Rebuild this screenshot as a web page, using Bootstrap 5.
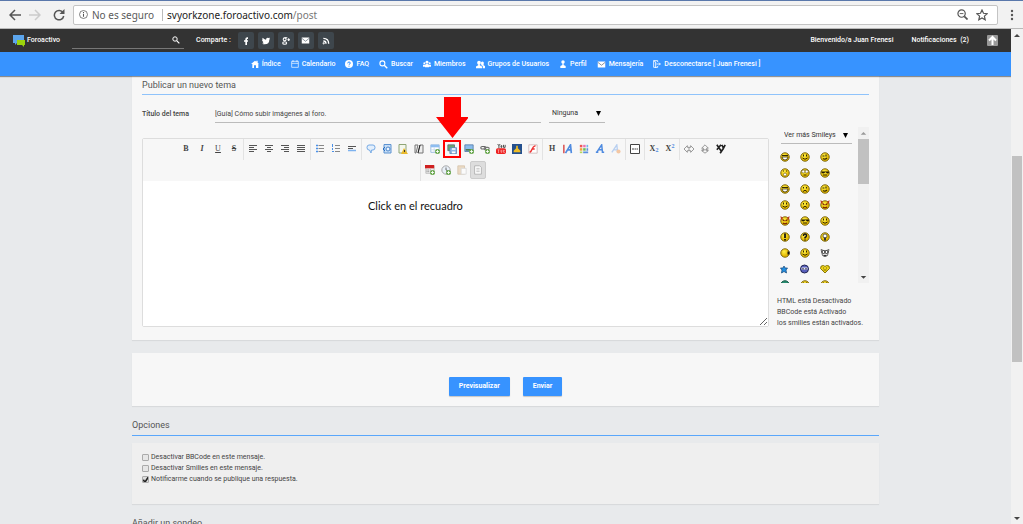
<!DOCTYPE html>
<html lang="es">
<head>
<meta charset="utf-8">
<meta name="viewport" content="width=device-width, initial-scale=1">
<title>Publicar un nuevo tema</title>
<link href="https://cdn.jsdelivr.net/npm/bootstrap@5.3.0/dist/css/bootstrap.min.css" rel="stylesheet">
<style>
body{font:400 7px/11px Roboto,"Liberation Sans",sans-serif;color:#444;background:#e8eaec}
button,input,select,textarea{font:inherit;color:inherit}
button{border:0;background:none;padding:0}
svg{display:block;flex:none}
.i8{width:8px;height:8px}.i9{width:9px;height:9px}.i12{width:12px;height:12px}
/* browser bar */
.browser{height:29px;background:#f2f2f2;border-top:1px solid #5a78ab;border-bottom:1px solid #b9b9b9;padding:0 9px;color:#5a5a5a;font:10px/18px "Noto Sans",sans-serif}
.address{height:20px;background:#fff;border:1px solid #c4c4c4;border-radius:2px;padding:0 5px}
.host{color:#222}.tail{color:#777}
.sepbar{width:1px;height:12px;background:#bbb}
/* forum bars */
.topbar{height:23px;background:#333;color:#fff;font-weight:500;padding:0 13px}
.topbar a,.mainnav a{color:#fff;text-decoration:none}
.brand{gap:2px}
.topsearch{width:112px;border-bottom:1px solid #777;height:17px;margin:0 12px}
.topsearch input{border:0;background:none;width:90px;height:14px;outline:0}
.share-label{margin-right:7px}
.share{width:16px;height:17px;background:#3e464c;border-radius:2px}
.session{gap:18px}
.mainnav{height:24px;background:#3793ff;font-weight:500;box-shadow:0 1px 1px #0006;position:relative}
.nv{display:flex;align-items:center;gap:3px;margin:0 5px}
.totop{width:11px;height:11px;background:#999;border-radius:1px}
/* content */
.forum{max-width:747px;width:100%}
.panel{background:#f7f7f7;box-shadow:0 1px 1px #0001}
.postbox{padding:3px 10px 11px}
.title{font-size:9px;line-height:12px;font-weight:400;color:#555;margin:0;border-bottom:1px solid #8fc3fb}
.title.strong{border-color:#5aa7fb}
.postbox .title{padding-bottom:3px}
.subject{margin-top:10px}
.lined{border:0;border-bottom:1px solid #bbb;background:none;border-radius:0;outline:0;height:18px;padding:0}
.pick{appearance:none;color:#333;background:url("data:image/svg+xml,%3Csvg xmlns='http://www.w3.org/2000/svg' viewBox='0 0 6 6'%3E%3Cpath d='M0 0h6L3 6z'/%3E%3C/svg%3E") no-repeat right 4px center/5px 5px}
.prefix{width:56px;padding-left:3px;margin-right:264px}
.label{width:73px;font-weight:500}
.work{margin-top:4px}
.editor{border:1px solid #ddd;border-radius:2px;background:#fff;margin-top:11px}
.tools{background:#f7f7f7;padding:0 32px 0 28px}
.grp{display:flex;align-items:center;height:21px;padding:0 1px 2px}
.grp.bar{border-right:1px solid #e3e3e3}
.grp.edge{border-left:1px solid #e3e3e3}
.tb{width:16px;height:18px;display:flex;align-items:center;justify-content:center;font:bold 8px/10px "Liberation Serif",serif;color:#444}
.tb svg{width:10px;height:10px}
.tb.hot{width:18px;border:2px solid #f00;position:relative}
.tb.hot .arrow-down{position:absolute;bottom:18px;left:50%;margin-left:-16px;width:32px;height:41px}
.tb.on{background:#ddd;border:1px solid #ccc;border-radius:2px}
.tb sub,.tb sup{color:#4f8be0}
.editor textarea{height:145px;border:0;outline:0;resize:vertical;width:100%;display:block;padding:4px}
.note{position:absolute;left:36%;top:60px;font:11px/14px Lato,sans-serif;color:#111}
.side{width:92px}
.smileys{height:156px;overflow:hidden}
.more{width:71px;margin-left:4px;padding-left:3px;height:17px}
.faces{display:grid;grid-template-columns:repeat(3,20px);grid-auto-rows:16px;margin:5px 0 0 -2px}
.faces button{display:flex;align-items:center;justify-content:center}
.faces svg{width:10px;height:10px}
.rules{margin-top:13px}
.track{background:#f1f1f1}
.track i{background:#c1c1c1}
.track svg{width:100%;height:12px}
.side-track{width:11px}
.thumb-a{height:45px}
.page-track{width:12px}
.page-track .before{flex:114}.page-track .thumb-b{flex:205;margin:0 1px}.page-track .after{flex:149}
.sendbox{margin-top:13px;padding:24px 0 10px;gap:13px}
.blue{background:#3793ff;color:#fff;font-weight:700;height:19px;border-radius:1px;box-shadow:0 1px 1px #0003;line-height:19px;padding:0 10px}
.optitle{margin-top:13px;padding-bottom:4px;margin-bottom:7px}
.opts{background:#efefef;padding:9px 10px 19px;box-shadow:0 1px 1px #0001}
.opts label{gap:2px}
.opts input{width:7px;height:7px;margin:0;flex:none;appearance:none;border:1px solid #aaa;background:#e6e6e6;border-radius:1px}
.opts input:checked{background:#ddd url("data:image/svg+xml,%3Csvg xmlns='http://www.w3.org/2000/svg' viewBox='0 0 8 8'%3E%3Cpath d='M1 4l2 3 4-6' fill='none' stroke='%23222' stroke-width='2'/%3E%3C/svg%3E") center/6px 6px no-repeat}
</style>
</head>
<body class="vh-100 overflow-hidden d-flex flex-column">
<svg width="0" height="0" class="position-absolute" aria-hidden="true">
<defs>
<radialGradient id="gy" cx=".4" cy=".35"><stop offset="0" stop-color="#fff04a"/><stop offset="1" stop-color="#e3b800"/></radialGradient>
<g id="face"><circle cx="10" cy="10" r="8.5" fill="url(#gy)" stroke="#75600a" stroke-width="1.8"/></g>
<symbol id="grin" viewBox="0 0 20 20"><use href="#face"/><path d="M4 7h12" stroke="#332800" stroke-width="2"/><path d="M4 10h12q-1 6-6 6t-6-6z" fill="#fff" stroke="#332800" stroke-width="1.500"/></symbol>
<symbol id="smile" viewBox="0 0 20 20"><use href="#face"/><path d="M7 5v4M13 5v4M5 12q5 5 10 0" fill="none" stroke="#332800" stroke-width="2"/></symbol>
<symbol id="wink" viewBox="0 0 20 20"><use href="#face"/><path d="M5 8h4M12 5v4M6 13q4 3 8-1" fill="none" stroke="#332800" stroke-width="2.2"/></symbol>
<symbol id="sad" viewBox="0 0 20 20"><use href="#face"/><path d="M7 6v3M13 6v3M6 15q4-5 8 0" fill="none" stroke="#332800" stroke-width="2"/></symbol>
<symbol id="shock" viewBox="0 0 20 20"><use href="#face"/><circle cx="6.500" cy="7" r="3" fill="#fff" stroke="#443700"/><circle cx="13.500" cy="7" r="3" fill="#fff" stroke="#443700"/><path d="M7 14h6" stroke="#332800" stroke-width="2"/></symbol>
<symbol id="open" viewBox="0 0 20 20"><use href="#face"/><path d="M6 6h2M12 6h2" stroke="#332800" stroke-width="2"/><circle cx="10" cy="13" r="3" fill="#fff" stroke="#443700"/></symbol>
<symbol id="cool" viewBox="0 0 20 20"><use href="#face"/><path d="M2 7h16v2q-3 4-7-1-4 5-8 1z" fill="#221b00"/><path d="M6 14h8" stroke="#332800" stroke-width="2"/></symbol>
<symbol id="devil" viewBox="0 0 20 20"><use href="#face"/><path d="M1 0l5 4-4 4zM19 0l-5 4 4 4z" fill="#b8371c"/><path d="M5 7l4 3M15 7l-4 3M6 14q4 3 8 0" fill="none" stroke="#7a1900" stroke-width="2.200"/></symbol>
<symbol id="bang" viewBox="0 0 20 20"><use href="#face"/><path d="M10 3v9M10 14v3" stroke="#111" stroke-width="3.500"/></symbol>
<symbol id="ask" viewBox="0 0 20 20"><use href="#face"/><path d="M7 8q0-4 3-4t3 3-3 4v2M10 15v2" fill="none" stroke="#111" stroke-width="2.800"/></symbol>
<symbol id="bulb" viewBox="0 0 20 20"><use href="#face"/><circle cx="10" cy="8" r="4" fill="#fff" stroke="#333" stroke-width="1.500"/><path d="M10 11v6" stroke="#333" stroke-width="4"/></symbol>
<symbol id="side" viewBox="0 0 20 20"><use href="#face"/><path d="M17 7v6" stroke="#111" stroke-width="4"/></symbol>
<symbol id="geek" viewBox="0 0 20 20"><path d="M2 3l8 3 8-3-3 12q-5 5-10 0z" fill="#ddd" stroke="#444" stroke-width="1.500"/><circle cx="7" cy="8" r="3" fill="#fff" stroke="#333" stroke-width="2"/><circle cx="13" cy="8" r="3" fill="#fff" stroke="#333" stroke-width="2"/><path d="M7 15h6" stroke="#333" stroke-width="2"/></symbol>
<symbol id="star" viewBox="0 0 20 20"><path d="M8 4l2 4h5l-3 4 1 6-5-3-5 3 1-6-3-4h5z" fill="#218fe2" stroke="#174a7c" stroke-width="1.500"/></symbol>
<symbol id="ninja" viewBox="0 0 20 20"><circle cx="9" cy="10" r="8" fill="#5960bd" stroke="#222552" stroke-width="2"/><path d="M3 7h12v4H3z" fill="#e8e8f8"/><path d="M6 8v3M12 8v3" stroke="#111" stroke-width="2"/></symbol>
<symbol id="heart" viewBox="0 0 20 20"><path d="M10 18L1 9q0-7 6-6l3 2 3-2q7-1 6 6z" fill="#ecd31a" stroke="#7c6a00" stroke-width="1.800"/><path d="M6 8h2M12 8h2M7 12h6" stroke="#554700" stroke-width="1.500"/></symbol>
<symbol id="green" viewBox="0 0 20 20"><circle cx="10" cy="10" r="8.500" fill="#2a8f72" stroke="#175848" stroke-width="2"/></symbol>
<symbol id="mag" viewBox="0 0 12 12"><circle cx="4.500" cy="4.500" r="3.300" fill="none" stroke="currentColor" stroke-width="1.500"/><path d="M7 7l4 4" stroke="currentColor" stroke-width="1.800"/></symbol>
<symbol id="mail" viewBox="0 0 12 12"><path d="M1 2h10v8H1z" fill="currentColor"/><path d="M1 3l5 4 5-4" fill="none" stroke="#65717c"/></symbol>
<g id="plus"><circle cx="9" cy="9" r="3" fill="#63a447"/><path d="M9 7v4M7 9h4" stroke="#fff"/></g>
</defs>
</svg>

<header class="browser d-flex align-items-center flex-shrink-0">
  <button aria-label="Atrás"><svg class="i12" viewBox="0 0 12 12" fill="none" stroke="#555" stroke-width="1.500"><path d="M12 6H1M6 1L1 6l5 5"/></svg></button>
  <button class="ms-2" aria-label="Adelante"><svg class="i12" viewBox="0 0 12 12" fill="none" stroke="#ccc" stroke-width="1.500"><path d="M0 6h11M6 1l5 5-5 5"/></svg></button>
  <button class="ms-2 me-2 ps-1" aria-label="Recargar"><svg class="i12" viewBox="0 0 12 12"><path d="M10 3.500A4.700 4.700 0 1 0 10.700 7" fill="none" stroke="#555" stroke-width="1.500"/><path d="M11.500 0v5h-5z" fill="#555"/></svg></button>
  <div class="address d-flex align-items-center flex-fill gap-1">
    <svg class="i9" viewBox="0 0 12 12" fill="none" stroke="#555"><circle cx="6" cy="6" r="5.300"/><path d="M6 5v4M6 2.500v1.500" stroke-width="1.400"/></svg>
    <span>No es seguro</span><span class="sepbar ms-1"></span>
    <span class="me-auto"><span class="host">svyorkzone.foroactivo.com</span><span class="tail">/post</span></span>
    <button aria-label="Alejar"><svg width="11" height="11" viewBox="0 0 12 12" fill="none" stroke="#555"><circle cx="5" cy="5" r="4" stroke-width="1.300"/><path d="M3 5h4"/><path d="M8 8l3.500 3.500" stroke-width="1.800"/></svg></button>
    <button class="ms-1 me-1" aria-label="Favorito"><svg width="12" height="12" viewBox="0 0 12 12" fill="none" stroke="#555" stroke-width="1.200"><path d="M6 1l1.500 3.300 3.700.4-2.800 2.400.8 3.700L6 9l-3.200 1.800.8-3.700L.8 4.700l3.700-.4z"/></svg></button>
  </div>
  <button class="ms-2 ps-1" aria-label="Menú"><svg width="4" height="12" viewBox="0 0 4 12" fill="#555"><circle cx="2" cy="2" r="1.200"/><circle cx="2" cy="6" r="1.200"/><circle cx="2" cy="10" r="1.200"/></svg></button>
</header>

<div class="d-flex flex-fill overflow-hidden">
<div class="flex-fill overflow-hidden">
  <div class="topbar d-flex align-items-center">
    <a href="#" class="brand d-flex align-items-center"><svg width="12" height="12" viewBox="0 0 12 12"><path d="M0 0h11v8H4l-2 2V8H0z" fill="#5ca5ec"/><path d="M4 5h8v5h-1v2L9 10H4z" fill="#9bd30c"/></svg>Foroactivo</a>
    <form class="topsearch d-flex align-items-center justify-content-between pe-1"><input type="search" aria-label="Buscar"><button type="button" aria-label="Buscar" class="text-white"><svg class="i8"><use href="#mag"/></svg></button></form>
    <span class="share-label">Comparte :</span>
    <div class="d-flex gap-1">
      <a href="#" aria-label="Facebook" class="share d-flex align-items-center justify-content-center"><svg class="i8" viewBox="0 0 12 12"><path d="M5 12V7H3V5h2V3q0-3 4-2.500V3H7.500v2H9v2H7.500v5z" fill="#fff"/></svg></a>
      <a href="#" aria-label="Twitter" class="share d-flex align-items-center justify-content-center"><svg class="i8" viewBox="0 0 12 12"><path d="M0 10q2 0 3-1-2 0-2-2h1Q0 6 0 4l1 .3Q0 3 1 1q2 2 5 3 0-3 2.500-3L10 1.500 12 1l-1 2 1-.2-1 1.400Q11 11 4 11q-2 0-4-1z" fill="#fff"/></svg></a>
      <a href="#" aria-label="Google+" class="share d-flex align-items-center justify-content-center"><svg class="i8" viewBox="0 0 12 12" fill="none" stroke="#fff" stroke-width="1.600"><circle cx="4" cy="3.500" r="2.200"/><ellipse cx="4" cy="9" rx="3" ry="2"/><path d="M4 1h4M8 4h4M10 2v4"/></svg></a>
      <a href="#" aria-label="Correo" class="share d-flex align-items-center justify-content-center"><svg class="i9"><use href="#mail"/></svg></a>
      <a href="#" aria-label="RSS" class="share d-flex align-items-center justify-content-center"><svg class="i8" viewBox="0 0 12 12" fill="none" stroke="#fff" stroke-width="2"><path d="M2 2q8 0 8 8M2 6q4 0 4 4"/><circle cx="2.500" cy="9.500" r=".6"/></svg></a>
    </div>
    <div class="session d-flex align-items-center ms-auto">
      <span>Bienvenido/a Juan Frenesi</span>
      <a href="#">Notificaciones&nbsp; (2)</a>
      <a href="#" aria-label="Arriba" class="totop"><svg width="11" height="11" viewBox="0 0 11 11" fill="none" stroke="#fff" stroke-width="2"><path d="M5.500 10V2M2 5.500L5.500 2 9 5.500"/></svg></a>
    </div>
  </div>
  <nav class="mainnav d-flex align-items-center justify-content-center" aria-label="Principal">
    <a href="#" class="nv"><svg class="i8" viewBox="0 0 12 12"><path d="M0 6l6-5 2 1.500V1h2v3l2 2h-1v6H7.500V8h-3v4H2V6z" fill="#fff"/></svg>Índice</a>
    <a href="#" class="nv"><svg class="i8" viewBox="0 0 12 12" fill="none" stroke="#fff"><path d="M1 2h10v9H1zM1 5h10M3 0v3M9 0v3"/></svg>Calendario</a>
    <a href="#" class="nv"><svg class="i8" viewBox="0 0 12 12"><circle cx="6" cy="6" r="6" fill="#fff"/><path d="M4 5q0-2 2-2t2 1.500-2 2V7M6 8.500V10" fill="none" stroke="#3793ff" stroke-width="1.500"/></svg>FAQ</a>
    <a href="#" class="nv"><svg class="i9"><use href="#mag"/></svg>Buscar</a>
    <a href="#" class="nv"><svg class="i8" viewBox="0 0 12 12" fill="#fff"><circle cx="6" cy="3.500" r="2.200"/><circle cx="2" cy="5" r="1.500"/><circle cx="10" cy="5" r="1.500"/><path d="M0 7h3l2-1h2l2 1h3v3H9v1H3v-1H0z"/></svg>Miembros</a>
    <a href="#" class="nv"><svg class="i9" viewBox="0 0 12 12" fill="#fff"><circle cx="4" cy="3.500" r="2.500"/><circle cx="8.500" cy="4" r="2"/><path d="M0 11V8.500l3-1.500V5h2v2l3 1.500V11zM9 11V8L7 7V5h3v2l2 1v3z"/></svg>Grupos de Usuarios</a>
    <a href="#" class="nv"><svg class="i8" viewBox="0 0 12 12" fill="#fff"><circle cx="6" cy="3" r="2.600"/><path d="M2 12V9l3-1.500V5h2v2.500L10 9v3z"/></svg>Perfil</a>
    <a href="#" class="nv"><svg class="i9"><use href="#mail"/></svg>Mensajería</a>
    <a href="#" class="nv"><svg class="i8" viewBox="0 0 12 12" fill="none" stroke="#fff" stroke-width="1.300"><path d="M7 3V1H1v10h6V9M1 1l3 2v9M5 6h6M9 4l2 2-2 2"/></svg>Desconectarse [ Juan Frenesi ]</a>
  </nav>

  <main class="forum mx-auto">
    <form>
    <section class="panel postbox">
      <h1 class="title">Publicar un nuevo tema</h1>
      <div class="d-flex align-items-center subject">
        <label class="label" for="subject">Título del tema</label>
        <input id="subject" class="lined flex-fill me-2" value="[Guía] Cómo subir imágenes al foro.">
        <select class="lined pick prefix" aria-label="Prefijo"><option>Ninguna</option></select>
      </div>
      <div class="d-flex work">
        <div class="editor flex-fill position-relative align-self-start">
          <div class="tools d-flex flex-wrap justify-content-center" role="toolbar" aria-label="Formato">
            <div class="grp bar">
              <button type="button" class="tb">B</button><button type="button" class="tb fst-italic">I</button><button type="button" class="tb fw-normal text-decoration-underline">U</button><button type="button" class="tb text-decoration-line-through">S</button>
            </div>
            <div class="grp bar">
              <button type="button" class="tb" aria-label="Izquierda"><svg viewBox="0 0 10 10" stroke="#555"><path d="M1 1.500h8M1 3.500h5M1 5.500h8M1 7.500h5"/></svg></button>
              <button type="button" class="tb" aria-label="Centrar"><svg viewBox="0 0 10 10" stroke="#555"><path d="M1 1.500h8M3 3.500h4M1 5.500h8M3 7.500h4"/></svg></button>
              <button type="button" class="tb" aria-label="Derecha"><svg viewBox="0 0 10 10" stroke="#555"><path d="M1 1.500h8M4 3.500h5M1 5.500h8M4 7.500h5"/></svg></button>
              <button type="button" class="tb" aria-label="Justificar"><svg viewBox="0 0 10 10" stroke="#555"><path d="M1 1.500h8M1 3.500h8M1 5.500h8M1 7.500h8"/></svg></button>
            </div>
            <div class="grp bar">
              <button type="button" class="tb" aria-label="Lista"><svg viewBox="0 0 10 10"><path d="M3.500 1.500H9M3.500 4.500H9M3.500 7.500H9" stroke="#888"/><path d="M1 1.500h2M1 4.500h2M1 7.500h2" stroke="#4a90e8" stroke-width="1.500"/></svg></button>
              <button type="button" class="tb" aria-label="Lista numerada"><svg viewBox="0 0 10 10"><path d="M4 1.500h5M4 4.500h5M4 7.500h5" stroke="#888"/><path d="M1.500 0v3M1.500 4v2M1 7.500h2" stroke="#4a90e8"/></svg></button>
              <button type="button" class="tb" aria-label="Línea"><svg viewBox="0 0 10 10"><path d="M1 2.500h8M1 4.500h5" stroke="#555"/><path d="M1 6.500h8" stroke="#7db2ef" stroke-width="1.500"/></svg></button>
            </div>
            <div class="grp bar">
              <button type="button" class="tb" aria-label="Cita"><svg viewBox="0 0 10 10"><path d="M3 1h4q2 0 2 2.500T7 6H5.500L5 9 3.500 6H3Q1 6 1 3.500T3 1z" fill="#e3effc" stroke="#75a9e4"/></svg></button>
              <button type="button" class="tb" aria-label="Código"><svg viewBox="0 0 10 10"><path d="M2 .5h7v8.500H2z" fill="#c8def6" stroke="#5d93d1"/><path d="M3 3L1 5l2 2" stroke="#296fc2" fill="none"/><circle cx="6" cy="5" r="2" fill="#eef6ff" stroke="#4a86ca"/></svg></button>
              <button type="button" class="tb" aria-label="Spoiler"><svg viewBox="0 0 10 10"><path d="M1 .5h7v8.500H1z" fill="#f4f7ec" stroke="#8fa576"/><path d="M6 4l4 6H3z" fill="#e9b92b"/><path d="M6.500 6v2" stroke="#333"/></svg></button>
              <button type="button" class="tb" aria-label="Oculto"><svg viewBox="0 0 10 10"><path d="M1 1h3L2 9H1zM9 1H6L4 9h5z" fill="#eee" stroke="#777"/><path d="M6 1L4 9" stroke="#222"/></svg></button>
              <button type="button" class="tb" aria-label="Tabla"><svg viewBox="0 0 12 12"><path d="M1 1h10v9H1z" fill="#fff" stroke="#8eb5dd"/><path d="M1 2.500h10" stroke="#8ebdf0" stroke-width="3"/><path d="M1 7h10M5 4v6" stroke="#c9d9e9"/><use href="#plus"/></svg></button>
              <button type="button" class="tb hot" aria-label="Alojar una imagen"><svg viewBox="0 0 12 12"><path d="M1 1h8v7H1z" fill="#6aa870" stroke="#667"/><path d="M3.500 4.500h8v7h-8z" fill="#8fb9e6" stroke="#5c84b3"/><path d="M6 5h4v2H6zM6 9h4v2H6z" fill="#fff"/></svg>
              <svg class="arrow-down" viewBox="0 0 32 41" fill="#f00"><path d="M8 0h17v20h8L16.500 41 0 20h8z"/></svg></button>
              <button type="button" class="tb" aria-label="Imagen"><svg viewBox="0 0 12 12"><path d="M1 1h10v8H1z" fill="#8bbcec" stroke="#557da8"/><path d="M2 6h8v2H2z" fill="#4f7b52"/><use href="#plus"/></svg></button>
              <button type="button" class="tb" aria-label="Enlace"><svg viewBox="0 0 12 12"><rect x="1" y="3" width="6" height="3" rx="1.500" fill="none" stroke="#666" stroke-width="1.300"/><rect x="5" y="4" width="6" height="3" rx="1.500" fill="none" stroke="#777" stroke-width="1.300"/><use href="#plus"/></svg></button>
              <button type="button" class="tb" aria-label="YouTube"><svg viewBox="0 0 12 12"><rect y="5" width="12" height="7" rx="2" fill="#e22"/><path d="M2 0l1.500 2L5 0M3.500 2v3M6 2h1v2H6zM9 1v3h2V1" fill="none" stroke="#333"/><path d="M2 7h2M3 7v4M6 7v3h1V7M9 7v3h2M9 8h2" stroke="#ffb5b5" fill="none" stroke-width=".8"/></svg></button>
              <button type="button" class="tb" aria-label="Vídeo"><svg viewBox="0 0 12 12"><path d="M0 0h12v12H0z" fill="#24508e"/><path d="M5 2h2v3l3 3v2H2V8l3-3z" fill="#f0bd24"/></svg></button>
              <button type="button" class="tb" aria-label="Flash"><svg viewBox="0 0 12 12"><path d="M1 1h10v10H1z" fill="#fff" stroke="#ccb6b6"/><path d="M9 2Q6 3 5 6T2 10M5 6h3" fill="none" stroke="#e33" stroke-width="1.700"/></svg></button>
            </div>
            <div class="grp bar">
              <button type="button" class="tb">H</button>
              <button type="button" class="tb" aria-label="Tamaño"><svg viewBox="0 0 12 12" fill="none"><path d="M1 1v10" stroke="#dc6060" stroke-width="2"/><path d="M3 11L9 1l1 10M5 7h5" stroke="#4f8be0" stroke-width="2"/></svg></button>
              <button type="button" class="tb" aria-label="Color"><svg viewBox="0 0 12 12"><path d="M1 1h3v3H1z" fill="#e55"/><path d="M5 1h3v3H5z" fill="#eb74b1"/><path d="M9 1h2v3H9z" fill="#71b5ed"/><path d="M1 5h3v3H1z" fill="#f4a13c"/><path d="M5 5h3v3H5z" fill="#68be55"/><path d="M9 5h2v3H9zM5 9h6v2H5z" fill="#5c8fdf"/><path d="M1 9h3v2H1z" fill="#b9d65c"/></svg></button>
              <button type="button" class="tb" aria-label="Fuente"><svg viewBox="0 0 12 12" fill="none"><path d="M1 10h3M2 10L8 1l1 9M8 10h3M4 7h5" stroke="#4f8be0" stroke-width="1.800"/></svg></button>
              <button type="button" class="tb" aria-label="Quitar formato"><svg viewBox="0 0 12 12" fill="none"><path d="M1 10L7 1l1 9M4 7h4" stroke="#b8cff0" stroke-width="1.600"/><circle cx="9" cy="9" r="2.500" fill="#f3c7a4"/></svg></button>
            </div>
            <div class="grp bar"><button type="button" class="tb" aria-label="Más"><svg viewBox="0 0 10 10"><path d="M.5.5h9v9h-9z" fill="#fff" stroke="#444"/><path d="M2 5h6" stroke="#444" stroke-dasharray="2 .5"/></svg></button></div>
            <div class="grp bar"><button type="button" class="tb"><span>X<sub>2</sub></span></button><button type="button" class="tb"><span>X<sup>2</sup></span></button></div>
            <div class="grp">
              <button type="button" class="tb" aria-label="Marquesina horizontal"><svg viewBox="0 0 12 12" fill="none" stroke="#888"><path d="M4 2L0 6l4 4V8h4v2l4-4-4-4v2H4zM6 4v4"/></svg></button>
              <button type="button" class="tb" aria-label="Marquesina vertical"><svg viewBox="0 0 12 12" fill="none" stroke="#888"><path d="M2 5l4-4 4 4H8v3h2l-4 3-4-3h2V5zM2 7h8"/></svg></button>
              <button type="button" class="tb" aria-label="Aleatorio"><svg viewBox="0 0 12 12" fill="none" stroke="#222" stroke-width="2"><path d="M1 1l5 7M6 1L1 7M7 1l2 4 2-4M9 5l-4 6"/></svg></button>
            </div>
            <div class="grp edge">
              <button type="button" class="tb" aria-label="Fecha"><svg viewBox="0 0 12 12"><path d="M1 1h10v9H1z" fill="#eee" stroke="#bbb"/><path d="M0 0h11v4H0z" fill="#cf2020"/><path d="M2 6h6M2 8h4" stroke="#666" stroke-dasharray="1"/><use href="#plus"/></svg></button>
              <button type="button" class="tb" aria-label="Hora"><svg viewBox="0 0 12 12"><circle cx="6" cy="6" r="5" fill="#e9f0f8" stroke="#999"/><path d="M6 3v3l2 1" stroke="#555" fill="none"/><use href="#plus"/></svg></button>
              <button type="button" class="tb opacity-50" aria-label="Pegar"><svg viewBox="0 0 12 12"><path d="M1 1h8v10H1z" fill="#e1bf92" stroke="#b79362"/><path d="M5 4h6v7H5z" fill="#fff" stroke="#bbb"/></svg></button>
              <button type="button" class="tb on" aria-label="Código fuente"><svg viewBox="0 0 12 12"><path d="M2 1h6l2 2v8H2z" fill="#fff" stroke="#aaa"/><path d="M4 4h4M4 6h4M4 8h4" stroke="#bbb"/></svg></button>
            </div>
          </div>
          <textarea aria-label="Mensaje"></textarea>
          <span class="note">Click en el recuadro</span>
        </div>
        <aside class="side ms-2 flex-shrink-0">
          <div class="smileys d-flex justify-content-between">
            <div>
              <select class="lined pick more" aria-label="Smileys"><option>Ver más Smileys</option></select>
              <div class="faces"></div>
            </div>
            <div class="track d-flex flex-column side-track"><svg viewBox="0 0 12 12"><path d="M3 8l3-3 3 3z" fill="#999"/></svg><i class="thumb-a"></i><svg class="mt-auto" viewBox="0 0 12 12"><path d="M3 5l3 3 3-3z" fill="#444"/></svg></div>
          </div>
          <p class="mb-0 rules">HTML está Desactivado<br>BBCode está Activado<br>los smilies están activados.</p>
        </aside>
      </div>
    </section>
    <section class="panel sendbox d-flex justify-content-center align-items-start">
      <button type="button" class="blue">Previsualizar</button><button type="button" class="blue">Enviar</button>
    </section>
    <h2 class="title strong optitle">Opciones</h2>
    <section class="opts">
      <label class="d-flex align-items-center"><input type="checkbox">Desactivar BBCode en este mensaje.</label>
      <label class="d-flex align-items-center"><input type="checkbox">Desactivar Smilies en este mensaje.</label>
      <label class="d-flex align-items-center"><input type="checkbox" checked>Notificarme cuando se publique una respuesta.</label>
    </section>
    <h2 class="title strong optitle">Añadir un sondeo</h2>
    </form>
  </main>
</div>
<div class="track page-track d-flex flex-column flex-shrink-0"><svg viewBox="0 0 12 12"><path d="M3 8l3-3 3 3z" fill="#444"/></svg><span class="before"></span><i class="thumb-b"></i><span class="after"></span><svg viewBox="0 0 12 12"><path d="M3 5l3 3 3-3z" fill="#444"/></svg></div>
</div>
<script src="https://cdn.jsdelivr.net/npm/bootstrap@5.3.0/dist/js/bootstrap.bundle.min.js"></script>
<script>
// Smiley palette, three per row
const faces = ['grin','smile','wink','open','shock','cool','grin','sad','wink','smile','sad','devil','devil','cool','smile','bang','ask','bulb','side','smile','geek','star','ninja','heart','green','smile','smile'];
document.querySelector('.faces').innerHTML = faces.map(n => `<button type="button" aria-label="${n}"><svg><use href="#${n}"/></svg></button>`).join('');
</script>
</body>
</html>
